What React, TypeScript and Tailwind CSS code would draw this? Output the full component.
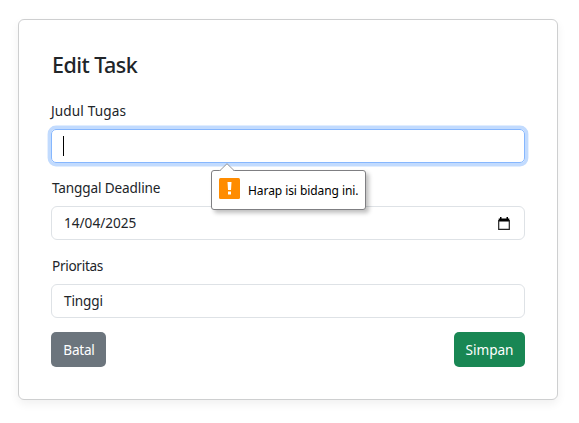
export default function App() {
  return (
    <div className="h-[423px] w-[579px] bg-white pl-[18px] pt-[19px] font-['Noto_Sans',sans-serif] text-[13.6px] text-[#212529]">
      <form className="flex h-[381px] w-[540px] flex-col rounded-[6px] border border-[#cecfd0] bg-white px-8 pt-[30px] shadow-[0_4px_10px_rgba(0,0,0,0.06)]">
        <h1 className="h-[29px] pl-px text-[21.5px] font-medium leading-[29px] tracking-[-0.55px]">Edit Task</h1>
        <label className="mt-[21px] h-[22px] leading-[22px] tracking-[0.12px]">Judul Tugas</label>
        <div className="relative mt-[7px] flex h-[34px] items-center rounded-[5px] border border-[#86b7fe] px-[11px] shadow-[0_0_0_3.4px_#c2dbfe]">
          <span className="h-5 w-px bg-black" />
          <div className="absolute left-[159px] top-[40px] z-10 flex h-[40px] w-[155px] items-center rounded-[3px] border border-[#7f7f82] bg-white pl-[7px] text-[12px] text-black shadow-[3px_3px_4px_rgba(0,0,0,0.25)]">
            <svg className="absolute left-[7px] top-[-8px]" width="16" height="9" viewBox="0 0 16 9">
              <path d="M1 8 L8 1 L15 8 V9 H1Z" fill="white" />
              <path d="M0 7.5 H1 L8 0.7 L15 7.5 H16" fill="none" stroke="#96969a" />
            </svg>
            <svg className="-mt-[3px] shrink-0" width="21" height="21" viewBox="0 0 21 21">
              <rect width="21" height="21" rx="1.5" fill="#ff8c00" />
              <path d="M8.5 4h4l-.5 8H9zM9 13.5h3v3H9z" fill="white" />
            </svg>
            <span className="ml-[8px] mt-px whitespace-nowrap tracking-[-0.07px]">Harap isi bidang ini.</span>
          </div>
        </div>
        <label className="mt-[14px] h-[22px] pl-px leading-[22px] tracking-[-0.14px]">Tanggal Deadline</label>
        <div className="mt-[7px] flex h-[34px] items-center justify-between rounded-[6px] border border-[#dee2e6] pl-[12px] pr-[14px]">
          <span>14/04/2025</span>
          <svg width="12" height="13" viewBox="0 0 12 13">
            <path d="M0.7 1.5h10.6v3H0.7zM2 0h1.5v2H2zM8.5 0H10v2H8.5z" fill="black" />
            <path d="M0.7 3v9.3h10.6V3" fill="none" stroke="#222" strokeWidth="1.2" />
          </svg>
        </div>
        <label className="mt-[15px] h-[22px] pl-px leading-[22px] tracking-[-0.3px]">Prioritas</label>
        <div className="mt-[7px] flex h-[34px] items-center rounded-[6px] border border-[#dee2e6] pl-[12px] tracking-[-0.15px]">Tinggi</div>
        <div className="mt-[14px] flex justify-between text-white">
          <button type="button" className="h-[35px] w-[55px] rounded-[5px] bg-[#6c757d] pl-px pt-px tracking-[-0.25px]">Batal</button>
          <button type="button" className="h-[35px] w-[71px] rounded-[5px] bg-[#198754] pt-px">Simpan</button>
        </div>
      </form>
    </div>
  );
}
